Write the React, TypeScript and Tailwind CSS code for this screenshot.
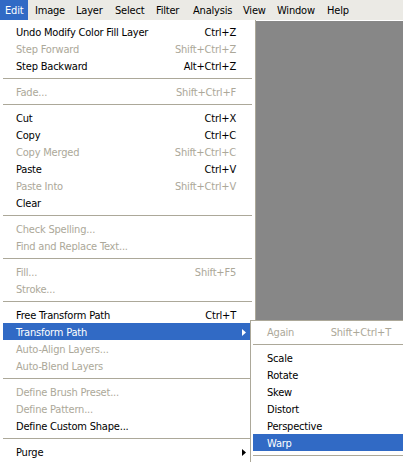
import React from 'react';

type Item =
  | { sep: true }
  | { label: string; keys?: string; off?: boolean; sub?: boolean; hot?: boolean };

const editMenu: Item[] = [
  { label: 'Undo Modify Color Fill Layer', keys: 'Ctrl+Z' },
  { label: 'Step Forward', keys: 'Shift+Ctrl+Z', off: true },
  { label: 'Step Backward', keys: 'Alt+Ctrl+Z' },
  { sep: true },
  { label: 'Fade...', keys: 'Shift+Ctrl+F', off: true },
  { sep: true },
  { label: 'Cut', keys: 'Ctrl+X' },
  { label: 'Copy', keys: 'Ctrl+C' },
  { label: 'Copy Merged', keys: 'Shift+Ctrl+C', off: true },
  { label: 'Paste', keys: 'Ctrl+V' },
  { label: 'Paste Into', keys: 'Shift+Ctrl+V', off: true },
  { label: 'Clear' },
  { sep: true },
  { label: 'Check Spelling...', off: true },
  { label: 'Find and Replace Text...', off: true },
  { sep: true },
  { label: 'Fill...', keys: 'Shift+F5', off: true },
  { label: 'Stroke...', off: true },
  { sep: true },
  { label: 'Free Transform Path', keys: 'Ctrl+T' },
  { label: 'Transform Path', sub: true, hot: true },
  { label: 'Auto-Align Layers...', off: true },
  { label: 'Auto-Blend Layers', off: true },
  { sep: true },
  { label: 'Define Brush Preset...', off: true },
  { label: 'Define Pattern...', off: true },
  { label: 'Define Custom Shape...' },
  { sep: true },
  { label: 'Purge', sub: true },
];

const transformMenu: Item[] = [
  { label: 'Again', keys: 'Shift+Ctrl+T', off: true },
  { sep: true },
  { label: 'Scale' },
  { label: 'Rotate' },
  { label: 'Skew' },
  { label: 'Distort' },
  { label: 'Perspective' },
  { label: 'Warp', hot: true },
  { sep: true },
];

// menu bar: [label, cell width + text inset]
const bar: [string, string][] = [
  ['Edit', 'w-[28px] pl-[5px]'],
  ['Image', 'w-[42px] pl-[7px]'],
  ['Layer', 'w-[39px] pl-[6px]'],
  ['Select', 'w-[41px] pl-[6px]'],
  ['Filter', 'w-[37px] pl-[6px]'],
  ['Analysis', 'w-[50px] pl-[6px]'],
  ['View', 'w-[34px] pl-[6px]'],
  ['Window', 'w-[50px] pl-[6px]'],
  ['Help', 'w-[40px] pl-[6px]'],
];

const Arrow = ({ white }: { white?: boolean }) => (
  <svg width="4" height="7" viewBox="0 0 4 7" className="shrink-0">
    <path d="M0 0L4 3.5L0 7Z" fill={white ? '#ffffff' : '#000000'} />
  </svg>
);

const MenuList = ({ items, textPad }: { items: Item[]; textPad: string }) => (
  <>
    {items.map((it, i) => {
      if ('sep' in it) {
        return (
          <div key={i} className="h-[9px] flex items-center">
            <div className="h-px w-full bg-[#aca899]" />
          </div>
        );
      }
      const color = it.hot ? 'bg-[#316ac5] text-white' : it.off ? 'text-[#aca899]' : 'text-black';
      return (
        <div key={i} className={`h-[17px] pt-px flex items-center whitespace-nowrap ${textPad} ${color}`}>
          <span>{it.label}</span>
          {it.keys && <span className="ml-auto pr-[16px]">{it.keys}</span>}
          {it.sub && (
            <span className="ml-auto mr-[6px] flex items-center">
              <Arrow white={it.hot} />
            </span>
          )}
        </div>
      );
    })}
  </>
);

export default function App() {
  return (
    <div className="relative w-[403px] h-[462px] overflow-hidden bg-white text-[11px] leading-none tracking-[-0.2px] font-['DejaVu_Sans_Condensed','DejaVu_Sans',sans-serif]">
      <div className="h-[20px] flex bg-[#ebeae5]">
        {bar.map(([name, cls], i) => (
          <div key={name} className={`h-full pt-px flex items-center ${cls} ${i === 0 ? 'bg-[#316ac5] text-white' : 'text-black'}`}>
            {name}
          </div>
        ))}
      </div>
      <div className="flex h-[442px]">
        <div className="w-[256px] border-r border-[#aca899] pt-[3px] px-[3px]">
          <MenuList items={editMenu} textPad="pl-[13px]" />
        </div>
        <div className="flex-1 mt-px bg-[#878787]" />
      </div>
      <div className="absolute left-[250px] top-[320px] w-[160px] h-[170px] bg-white border border-[#aca899] p-[2px]">
        <MenuList items={transformMenu} textPad="pl-[14px]" />
      </div>
    </div>
  );
}
